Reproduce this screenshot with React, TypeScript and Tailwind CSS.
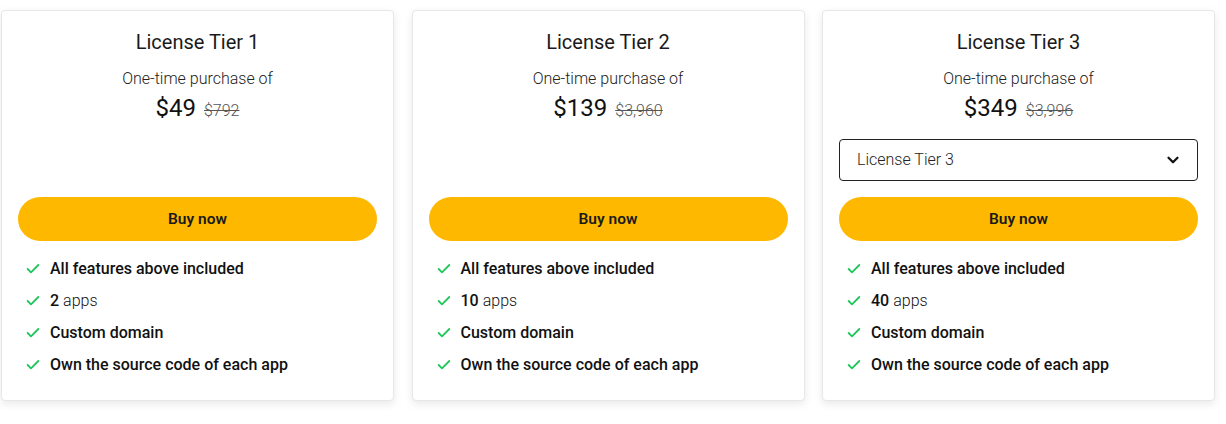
import { Check, ChevronDown } from 'lucide-react';

type Tier = {
  name: string;
  price: string;
  was: string;
  apps: number;
  picker?: boolean;
};

const tiers: Tier[] = [
  { name: 'License Tier 1', price: '$49', was: '$792', apps: 2 },
  { name: 'License Tier 2', price: '$139', was: '$3,960', apps: 10 },
  { name: 'License Tier 3', price: '$349', was: '$3,996', apps: 40, picker: true },
];

function Feature({ children }: { children: React.ReactNode }) {
  return (
    <li className="flex h-8 items-center gap-[9px] pl-[7px]">
      <Check className="h-4 w-4 text-[#22c55e]" strokeWidth={2.75} />
      <span className="text-[16px] text-[#111]">{children}</span>
    </li>
  );
}

function TierCard({ tier }: { tier: Tier }) {
  return (
    <div className="flex h-[391px] flex-col rounded-[4px] border border-gray-200 bg-white px-4 pt-[17px] shadow-[0_3px_8px_rgba(0,0,0,0.09)]">
      <h2 className="text-center text-[20px] leading-[28px] text-[#1a1a1a]">{tier.name}</h2>
      <p className="mt-[12px] text-center text-[16px] font-light leading-[22px] text-[#222]">One-time purchase of</p>
      <div className="mt-[2px] flex items-baseline justify-center gap-[8px]">
        <span className="text-[24px] leading-[32px] text-[#111]">{tier.price}</span>
        <span className="text-[16px] font-light text-[#555] line-through">{tier.was}</span>
      </div>
      <div className="mt-[15px] h-[42px]">
        {tier.picker ? (
          <div className="flex h-[42px] items-center justify-between rounded-[4px] border border-[#222] pl-[17px] pr-[15px]">
            <span className="text-[16px] font-light text-[#222]">{tier.name}</span>
            <ChevronDown className="h-[18px] w-[18px] text-[#111]" strokeWidth={3} />
          </div>
        ) : null}
      </div>
      <button className="mt-[16px] h-[44px] w-full rounded-full bg-[#ffb800] pt-[1px] text-[15.5px] font-semibold text-[#1a1a1a]">
        Buy now
      </button>
      <ul className="mt-[12px] font-medium">
        <Feature>All features above included</Feature>
        <Feature>
          {tier.apps} <span className="font-light">apps</span>
        </Feature>
        <Feature>Custom domain</Feature>
        <Feature>Own the source code of each app</Feature>
      </ul>
    </div>
  );
}

export default function App() {
  return (
    <div className="h-[424px] bg-white pl-[1px] pt-[10px]" style={{ fontFamily: 'Roboto, "Noto Sans", sans-serif' }}>
      <div className="grid w-[1214px] grid-cols-3 gap-[17.5px]">
        {tiers.map((t) => (
          <TierCard key={t.name} tier={t} />
        ))}
      </div>
    </div>
  );
}
